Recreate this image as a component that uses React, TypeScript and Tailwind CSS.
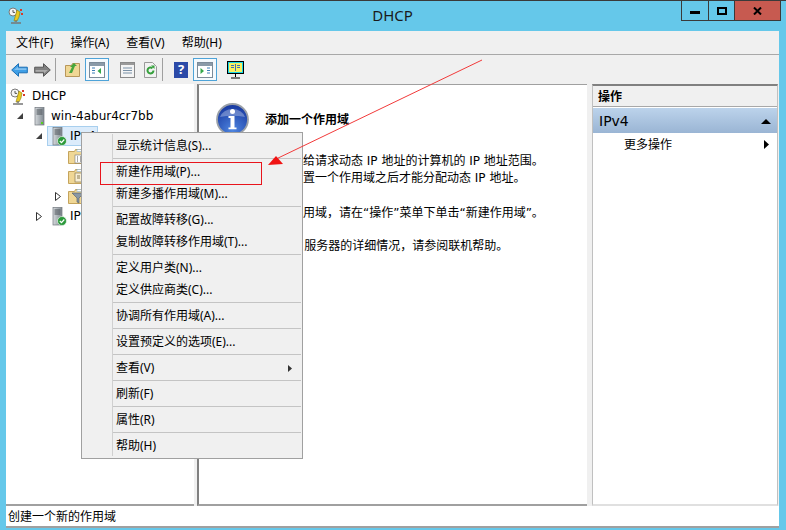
const menuGroups = [
  ['显示统计信息(S)...'],
  ['新建作用域(P)...', '新建多播作用域(M)...'],
  ['配置故障转移(G)...', '复制故障转移作用域(T)...'],
  ['定义用户类(N)...', '定义供应商类(C)...'],
  ['协调所有作用域(A)...'],
  ['设置预定义的选项(E)...'],
  ['查看(V)'],
  ['刷新(F)'],
  ['属性(R)'],
  ['帮助(H)'],
];

function DhcpIcon() {
  return (
    <svg width="16" height="17" viewBox="0 0 16 17" className="shrink-0">
      <circle cx="5" cy="5" r="4" fill="#f4f4f4" stroke="#7a7a7a" />
      <path d="M5 3v2.4h2" fill="none" stroke="#555" />
      <path d="M9 3l3 2-1 5-2 4H6l1-4z" fill="#e8c920" stroke="#8c7a10" strokeWidth="0.6" />
      <rect x="12" y="2" width="2" height="2" fill="#d83a2a" />
      <rect x="13" y="6" width="2" height="2" fill="#d83a2a" />
      <path d="M8 13v2M3 16h10" stroke="#777" strokeWidth="1.4" />
    </svg>
  );
}

function ServerIcon({ check = false }: { check?: boolean }) {
  return (
    <svg width="15" height="19" viewBox="0 0 15 19" className="shrink-0">
      <defs>
        <linearGradient id="srv" x1="0" x2="1" y1="0" y2="0">
          <stop offset="0" stopColor="#d6dadd" />
          <stop offset="1" stopColor="#7f8890" />
        </linearGradient>
      </defs>
      <rect x="1" y="0.5" width="9" height="17.5" fill="url(#srv)" stroke="#6f767c" strokeWidth="0.7" />
      <path d="M2.5 3h6M2.5 5h6M2.5 7h6" stroke="#4c5358" />
      {check ? (
        <>
          <circle cx="10" cy="14" r="4.5" fill="#2c9a3c" stroke="#fff" strokeWidth="0.6" />
          <path d="M7.8 14l1.7 1.7 2.8-3.2" fill="none" stroke="#fff" strokeWidth="1.2" />
        </>
      ) : (
        <rect x="7" y="15" width="2" height="2" fill="#58d020" />
      )}
    </svg>
  );
}

function FolderIcon({ kind }: { kind: 'grid' | 'page' | 'filter' }) {
  return (
    <svg width="18" height="15" viewBox="0 0 18 15" className="shrink-0">
      <path d="M0.5 2.5h6l1-2h8v14h-15z" fill="#f0d795" stroke="#c5a45c" />
      <rect x="9" y="0.5" width="6" height="2" fill="#fff" stroke="#7aa7cf" strokeWidth="0.5" />
      {kind === 'grid' && (
        <>
          <rect x="7" y="6" width="9" height="8" fill="#fff" stroke="#777" strokeWidth="0.6" />
          <path d="M9 8h1M12 8h2M9 10h1M12 10h2M9 12h1M12 12h2" stroke="#555" />
        </>
      )}
      {kind === 'page' && (
        <>
          <rect x="7" y="4" width="7" height="9" fill="#f8efd4" stroke="#8a7a50" strokeWidth="0.7" />
          <path d="M9 7h3M9 9h3" stroke="#8a7a50" />
        </>
      )}
      {kind === 'filter' && <path d="M4 4h12l-5 5v5l-2-1V9z" fill="#8b98a5" stroke="#4e5963" strokeWidth="0.6" />}
    </svg>
  );
}

function Expander({ open = false }: { open?: boolean }) {
  return (
    <svg width="8" height="9" viewBox="0 0 8 9" className="shrink-0">
      {open ? <path d="M7 1v6H1z" fill="#404040" /> : <path d="M1.5 0.5l5 4-5 4z" fill="#fff" stroke="#333" />}
    </svg>
  );
}

function NavArrow({ grey = false }: { grey?: boolean }) {
  const fill = grey ? '#808080' : '#3f9fe6';
  const edge = grey ? '#555' : '#1c6fb4';
  return (
    <svg width="17" height="14" viewBox="0 0 17 14" className={grey ? 'rotate-180' : ''}>
      <path d="M0.7 7L7.5 0.7v3.5h8.8v5.6H7.5v3.5z" fill={fill} stroke={edge} />
      <path d="M3 7l4-3.4v1.6h8.5V7z" fill="#fff" fillOpacity="0.35" />
    </svg>
  );
}

function PaneIcon({ side }: { side: 'left' | 'right' }) {
  return (
    <svg width="16" height="16" viewBox="0 0 16 16">
      <rect x="0.5" y="0.5" width="15" height="15" fill="#fff" stroke="#7c8b99" />
      <rect x="1" y="1" width="14" height="3" fill="#8a9aa8" />
      {side === 'left' ? (
        <>
          <path d="M3 6h3M3 8.500h3M3 11h3" stroke="#3d7fb8" />
          <path d="M12 6v6L8.500 9z" fill="#35a84a" />
        </>
      ) : (
        <>
          <path d="M10 6h3M10 8.500h3M10 11h3" stroke="#3d7fb8" />
          <path d="M3.500 6v6L7 9z" fill="#35a84a" />
        </>
      )}
    </svg>
  );
}

function InfoIcon() {
  return (
    <svg width="33" height="33" viewBox="0 0 33 33" className="shrink-0">
      <defs>
        <radialGradient id="info" cx="0.5" cy="0.85" r="0.9">
          <stop offset="0" stopColor="#4f86e0" />
          <stop offset="1" stopColor="#12319a" />
        </radialGradient>
      </defs>
      <circle cx="16.500" cy="16.500" r="15.500" fill="url(#info)" stroke="#9aa0a8" strokeWidth="1.800" />
      <path d="M4 14a13 11 0 0 1 25 0a30 14 0 0 0-25 0z" fill="#fff" fillOpacity="0.3" />
      <circle cx="16.500" cy="8.500" r="2.500" fill="#fff" />
      <path d="M12.500 13h6v11.500h2v1.800h-8v-1.800h2V15h-2z" fill="#fff" />
    </svg>
  );
}

export default function App() {
  return (
    <div className="relative flex h-[530px] w-[786px] flex-col overflow-hidden border-t border-[#3a3a3a] bg-[#65c8ea] font-['Noto_Sans','Noto_Sans_CJK_SC',sans-serif] text-[12px] text-black">
      {/* Title bar */}
      <div className="grid h-[30px] shrink-0 grid-cols-[1fr_auto_1fr]">
        <div className="pl-[8px] pt-[6px]">
          <DhcpIcon />
        </div>
        <div className="pr-px pt-[3px] text-[15px] leading-[22px] text-[#1a1a1a]">DHCP</div>
        <div className="flex justify-end pr-[5px]">
          <div className="-mt-px flex h-[21px] border border-[#3a3a3a]">
            <div className="flex w-[27px] items-center justify-center border-r border-[#3a3a3a]">
              <div className="mt-[3px] h-[3px] w-[10px] bg-black" />
            </div>
            <div className="flex w-[26px] items-center justify-center border-r border-[#3a3a3a]">
              <div className="h-[8px] w-[10px] border-2 border-black" />
            </div>
            <div className="flex w-[45px] items-center justify-center bg-[#c75a50]">
              <svg width="9" height="8" viewBox="0 0 9 8">
                <path d="M1 0.500l7 7M8 0.500l-7 7" stroke="#000" strokeWidth="2" />
              </svg>
            </div>
          </div>
        </div>
      </div>

      {/* Client area */}
      <div className="ml-[6px] mr-[7px] flex min-h-0 flex-1 flex-col bg-[#f0f0f0]">
        <div className="box-content flex h-[23px] shrink-0 items-center gap-[17px] border-b border-[#a8a8a8] pl-[10px]">
          <span>文件(F)</span>
          <span>操作(A)</span>
          <span>查看(V)</span>
          <span>帮助(H)</span>
        </div>

        {/* Toolbar */}
        <div className="flex h-[29px] shrink-0 items-center pl-[5px]">
          <NavArrow />
          <div className="ml-[6px]">
            <NavArrow grey />
          </div>
          <div className="ml-[4px] h-[23px] w-px bg-[#a0a0a0]" />
          <svg width="16" height="15" viewBox="0 0 16 15" className="ml-[9px]">
            <path d="M0.500 3.500h6l1-2h7v13h-14z" fill="#f0d795" stroke="#b8975a" />
            <path d="M4 11l3-6H5l4-4 3 3h-2l-3 7z" fill="#46a63c" />
          </svg>
          <div className="ml-[4px] flex h-[23px] w-[24px] items-center justify-center border border-[#4ea3d8] bg-[#f4f9fd]">
            <PaneIcon side="left" />
          </div>
          <svg width="15" height="16" viewBox="0 0 15 16" className="ml-[11px]">
            <rect x="0.500" y="0.500" width="14" height="15" fill="#f4f4f4" stroke="#8a8a8a" />
            <rect x="1" y="1" width="13" height="2" fill="#9a9a9a" />
            <path d="M3 6h9M3 8.500h9M3 11h9" stroke="#7a92a8" />
          </svg>
          <svg width="13" height="16" viewBox="0 0 13 16" className="ml-[9px]">
            <path d="M0.500 0.500h8l4 4v11h-12z" fill="#f2f2f2" stroke="#9a9a9a" />
            <path d="M9.500 8.500a3 3 0 1 1-1-2.300" fill="none" stroke="#35a03c" strokeWidth="2" />
            <path d="M7 3.500l3.500 0v3.500z" fill="#35a03c" />
          </svg>
          <div className="ml-[5px] h-[23px] w-px bg-[#a0a0a0]" />
          <div className="ml-[11px] flex h-[16px] w-[14px] items-center justify-center bg-[#2b4aa8] text-[13px] font-bold leading-none text-white">?</div>
          <div className="ml-[5px] flex h-[23px] w-[24px] items-center justify-center border border-[#4ea3d8] bg-[#f4f9fd]">
            <PaneIcon side="right" />
          </div>
          <svg width="17" height="18" viewBox="0 0 17 18" className="ml-[10px]">
            <rect x="0.500" y="0.500" width="16" height="12" fill="#f8f060" stroke="#000" />
            <rect x="1.500" y="1.500" width="14" height="10" fill="none" stroke="#19d6e6" />
            <path d="M8.500 3v7M4 4.500h3M4 6.500h3M10 4.500h3M10 6.500h3" stroke="#3d6fb8" />
            <path d="M8.500 13v3M4 17h9" stroke="#000" />
          </svg>
        </div>

        {/* Panes */}
        <div className="flex min-h-0 flex-1">
          <div className="w-[188px] shrink-0 border-b-2 border-[#a0a0a0] bg-white pt-[2px] font-['DejaVu_Sans','Noto_Sans_CJK_SC',sans-serif]">
            <div className="flex h-[20px] items-center gap-[6px] pl-[4px]">
              <DhcpIcon />
              <span>DHCP</span>
            </div>
            <div className="flex h-[20px] items-center pl-[10px]">
              <Expander open />
              <div className="ml-[10px]">
                <ServerIcon />
              </div>
              <span className="ml-[2px]">win-4abur4cr7bb</span>
            </div>
            <div className="flex h-[20px] items-center pl-[29px]">
              <Expander open />
              <div className="ml-[4px] flex h-[20px] w-[51px] items-center border border-[#a8cfee] bg-[#dcecfb] pl-[4px]">
                <ServerIcon check />
                <span className="ml-[3px]">IPv4</span>
              </div>
            </div>
            <div className="flex h-[20px] items-center pl-[62px]">
              <FolderIcon kind="grid" />
            </div>
            <div className="flex h-[20px] items-center pl-[62px]">
              <FolderIcon kind="page" />
            </div>
            <div className="flex h-[20px] items-center pl-[48px]">
              <Expander />
              <div className="ml-[6px]">
                <FolderIcon kind="filter" />
              </div>
            </div>
            <div className="flex h-[20px] items-center pl-[29px]">
              <Expander />
              <div className="ml-[9px]">
                <ServerIcon check />
              </div>
              <span className="ml-[3px]">IPv6</span>
            </div>
          </div>

          <div className="ml-[3px] flex w-[390px] shrink-0 border-b-2 border-l-2 border-t border-[#a0a0a0] border-l-[#808080] bg-white pl-[17px] pt-[18px] font-['DejaVu_Sans','Noto_Sans_CJK_SC',sans-serif]">
            <InfoIcon />
            <div className="-ml-[17px] pt-[7px] leading-[17.500px]">
              <div className="ml-[33px] font-['Noto_Sans_CJK_SC',sans-serif] font-bold">添加一个作用域</div>
              <div className="mt-[25px] -translate-x-[1px]">
                <p>作用域是分配给请求动态 IP 地址的计算机的 IP 地址范围。</p>
                <p>您必须先行配置一个作用域之后才能分配动态 IP 地址。</p>
                <p className="mt-[17px]">若要添加新作用域，请在“操作”菜单下单击“新建作用域”。</p>
                <p className="mt-[16px]">有关{'\u00a0\u00a0\u00a0'}DHCP 服务器的详细情况，请参阅联机帮助。</p>
              </div>
            </div>
          </div>

          <div className="ml-[5px] flex w-[186px] shrink-0 flex-col border-x border-b-2 border-[#c0c0c0] border-b-[#e0e0e0] border-t-2 border-t-[#808080] bg-white">
            <div className="box-content flex h-[19px] shrink-0 items-center border-b border-[#a8a8a8] bg-[#f0f0f0] pl-[5px] pt-px font-semibold">操作</div>
            <div className="mt-px flex h-[25px] shrink-0 items-center justify-between bg-gradient-to-b from-[#bcd3eb] to-[#9ab5d4] px-[6px] pt-px font-['DejaVu_Sans',sans-serif] text-[14px]">
              <span>IPv4</span>
              <svg width="10" height="5" viewBox="0 0 10 5">
                <path d="M5 0l5 5H0z" fill="#000" />
              </svg>
            </div>
            <div className="flex h-[22px] shrink-0 items-center justify-between pl-[31px] pr-[8px] pt-px">
              <span>更多操作</span>
              <svg width="5" height="9" viewBox="0 0 5 9">
                <path d="M0 0l5 4.500L0 9z" fill="#000" />
              </svg>
            </div>
          </div>
        </div>

        {/* Status bar */}
        <div className="flex h-[22px] shrink-0 items-center border-b-2 border-[#a0a0a0] bg-white pl-[2px] pt-px">创建一个新的作用域</div>
      </div>
      <div className="h-[2px] shrink-0" />

      {/* Context menu */}
      <div className="absolute left-[81px] top-[131px] h-[327px] w-[222px] border border-[#a0a0a0] bg-[#f0f0f0] pt-px">
        <div className="absolute bottom-[2px] left-[30px] top-px w-px bg-[#d0d0d0]" />
        {menuGroups.map((group, i) => (
          <div key={i}>
            {i > 0 && (
              <div className="flex h-[4px] items-center pl-[30px] pr-px">
                <div className="h-px w-full bg-[#c4c4c4]" />
              </div>
            )}
            {group.map((label) => (
              <div key={label} className="flex h-[22px] items-center justify-between pl-[34px] pr-[10px] pt-[2px]">
                <span>{label}</span>
                {label === '查看(V)' && (
                  <svg width="4" height="7" viewBox="0 0 4 7">
                    <path d="M0 0l4 3.500L0 7z" fill="#333" />
                  </svg>
                )}
              </div>
            ))}
          </div>
        ))}
      </div>

      {/* Annotation */}
      <div className="absolute left-[100px] top-[161px] h-[23px] w-[162px] border border-[#e8141c]" />
      <svg width="786" height="530" viewBox="0 0 786 530" className="pointer-events-none absolute left-0 top-[-1px]">
        <path d="M482 60L274 160" stroke="#f23a3a" strokeWidth="1" fill="none" />
        <path d="M268 165l8-9 7 8z" fill="#f01414" />
      </svg>
    </div>
  );
}
